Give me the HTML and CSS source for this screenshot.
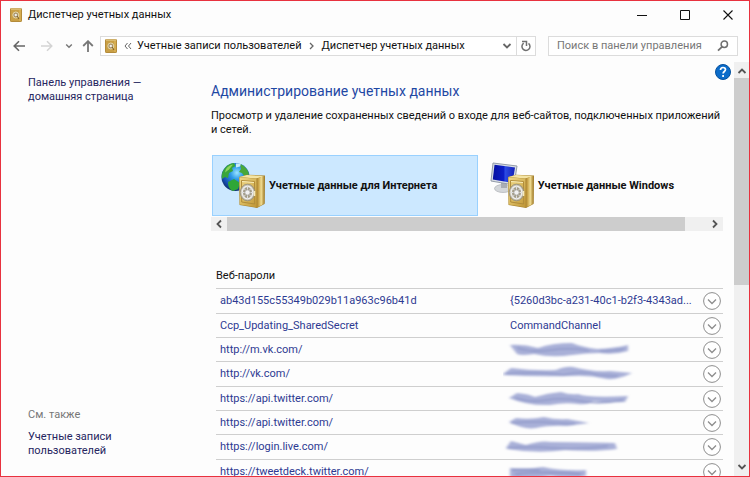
FILE: index.html
```html
<!DOCTYPE html>
<html lang="ru">
<head>
<meta charset="utf-8">
<title>Диспетчер учетных данных</title>
<link rel="stylesheet" href="styles.css">
</head>
<body>
<svg class="defs" aria-hidden="true">
  <defs>
    <linearGradient id="gold" x1="0" y1="0" x2="1" y2="1"><stop offset="0" stop-color="#efd98a"/><stop offset=".5" stop-color="#d9b95f"/><stop offset="1" stop-color="#c09636"/></linearGradient>
    <linearGradient id="side" x1="0" y1="0" x2="1" y2="0"><stop offset="0" stop-color="#a37c2b"/><stop offset=".25" stop-color="#c9a348"/><stop offset=".6" stop-color="#f0dc92"/><stop offset="1" stop-color="#a27c28"/></linearGradient>
    <radialGradient id="sea" cx=".55" cy=".35" r=".65"><stop offset="0" stop-color="#9be4ff"/><stop offset=".35" stop-color="#2f9be8"/><stop offset=".8" stop-color="#164cb0"/><stop offset="1" stop-color="#12336f"/></radialGradient>
    <linearGradient id="screen" x1="0" y1="0" x2="1" y2="0"><stop offset="0" stop-color="#0610a0"/><stop offset=".5" stop-color="#0c1ec8"/><stop offset=".55" stop-color="#2c4ce4"/><stop offset="1" stop-color="#1420b8"/></linearGradient>
    <filter id="smear" x="-10%" y="-50%" width="120%" height="200%"><feGaussianBlur stdDeviation="1.6 .9"/></filter>
    <symbol id="safe" viewBox="0 0 28 35">
      <path d="M1 3 9 .7 27 1.500 26.500 30 19 34 1.500 31z" fill="#a8842f"/>
      <path d="M1.500 3 9 1 26.500 2 18.500 4.500z" fill="#f4e4a4"/>
      <path d="M18.500 4.500 26.500 2V29.500L19 33.500z" fill="url(#side)"/>
      <path d="M1.500 3.200 18.500 4.700 18.700 33.300 1.800 30.500z" fill="url(#gold)"/>
      <path d="M3.500 6.500 16.500 7.500 16.700 30 3.700 28z" fill="none" stroke="#b08c3a"/>
      <path d="M4 7.500 16 8.500" stroke="#f9edb9"/>
      <ellipse cx="9.500" cy="18.500" rx="7.300" ry="8.300" fill="#c4bda6" stroke="#8f8b80" stroke-width=".8"/>
      <ellipse cx="9.500" cy="18.500" rx="5.300" ry="6.300" fill="#a49d88" stroke="#ececec" stroke-width="1.500"/>
      <path d="M9.500 12v13M4 18.500h11M5.500 14l8 9M13.500 14l-8 9" stroke="#ddd"/>
      <circle cx="9.500" cy="18.500" r="2.700" fill="#f1f1f1" stroke="#9a978f" stroke-width=".8"/>
      <path d="M16.500 17v5" stroke="#f5eac0" stroke-width="1.500"/>
    </symbol>
    <symbol id="mini" viewBox="0 0 12 14">
      <rect x=".5" y=".5" width="11" height="13" rx=".6" fill="#c99f45" stroke="#b48b3a"/>
      <path d="M1 1h10" stroke="#ead59a"/><path d="M10 2v11" stroke="#e1bc61"/>
      <circle cx="5.800" cy="7" r="3" fill="#a89367" stroke="#e6d7ab"/>
      <circle cx="5.800" cy="7" r="1.200" fill="#eee"/><path d="m7 8 2 3" stroke="#765b28"/>
    </symbol>
    <symbol id="expand" viewBox="0 0 18 18"><circle cx="9" cy="9" r="8.400" fill="#fff" stroke="#8d8d8d"/><path d="m5 7.500 4 4 4-4" fill="none" stroke="#8d8d8d" stroke-width="1.300"/></symbol>
    <symbol id="down" viewBox="0 0 10 10"><path d="m1.500 3 3.500 3.500L8.500 3" fill="none" stroke="currentColor" stroke-width="1.800"/></symbol>
  </defs>
</svg>
<div class="window">
  <header class="titlebar">
    <svg class="app-icon" aria-hidden="true"><use href="#mini"/></svg>
    <h1>Диспетчер учетных данных</h1>
    <div class="caption">
      <button aria-label="Свернуть"><svg width="10" height="10"><path d="M0 5.500h10" stroke="#111"/></svg></button>
      <button aria-label="Развернуть"><svg width="10" height="10"><path d="M.5.5h9v9h-9z" fill="none" stroke="#111"/></svg></button>
      <button aria-label="Закрыть"><svg width="10" height="10"><path d="m.5.500 9 9m0-9-9 9" stroke="#111" stroke-width="1.100"/></svg></button>
    </div>
  </header>
  <nav class="toolbar" aria-label="Навигация">
    <button aria-label="Назад"><svg width="12" height="12"><path d="M12 6H1.500M6 1.200 1.200 6 6 10.800" fill="none" stroke="#666" stroke-width="1.600"/></svg></button>
    <button class="forward" aria-label="Вперед"><svg width="12" height="12"><path d="M0 6h10.500M6 1.200 10.800 6 6 10.800" fill="none" stroke="#d4d4d4" stroke-width="1.500"/></svg></button>
    <button class="recent" aria-label="Последние"><svg width="8" height="8" viewBox="0 0 10 10"><use href="#down"/></svg></button>
    <button aria-label="Вверх"><svg width="12" height="12"><path d="M6 12V1.500M1.200 6 6 1.200 10.800 6" fill="none" stroke="#777" stroke-width="1.800"/></svg></button>
    <div class="address">
      <svg class="app-icon" aria-hidden="true"><use href="#mini"/></svg>
      <svg class="laquo" width="8" height="8"><path d="M3.500 1 1 4l2.500 3M7 1 4.500 4 7 7" fill="none" stroke="#666"/></svg>
      <a href="#">Учетные записи пользователей</a>
      <svg width="6" height="8"><path d="M1 1l3 3-3 3" fill="none" stroke="#666" stroke-width="1.300"/></svg>
      <a href="#">Диспетчер учетных данных</a>
      <button class="history" aria-label="Список адресов"><svg width="10" height="10"><use href="#down"/></svg></button>
      <button class="refresh" aria-label="Обновить"><svg width="10" height="12"><path d="M2.700 3.200a4 4 0 1 0 4.800.2" fill="none" stroke="#707070" stroke-width="1.500"/><path d="M1 1.500h4.500V6" fill="none" stroke="#707070" stroke-width="1.500"/></svg></button>
    </div>
    <div class="search">
      <input type="search" aria-label="Поиск" placeholder="Поиск в панели управления">
      <svg width="12" height="12"><circle cx="7.300" cy="4.200" r="3.200" fill="none" stroke="#707070" stroke-width="1.500"/><path d="M5 6.800 1 10.700" stroke="#707070" stroke-width="1.800"/></svg>
    </div>
  </nav>
  <div class="body">
    <aside>
      <a href="#">Панель управления — домашняя страница</a>
      <section>
        <h3>См. также</h3>
        <a href="#">Учетные записи пользователей</a>
      </section>
    </aside>
    <main>
      <button class="help" aria-label="Справка"><svg width="16" height="16"><circle cx="8" cy="8" r="7.500" fill="#0b6cca" stroke="#07529e"/><path d="M5.500 6c0-3.300 5-3.200 5-.4 0 2-2.400 1.800-2.400 4M8.100 11v1.900" fill="none" stroke="#fff" stroke-width="1.700"/></svg></button>
      <h2>Администрирование учетных данных</h2>
      <p>Просмотр и удаление сохраненных сведений о входе для веб-сайтов, подключенных приложений и сетей.</p>
      <div class="tiles">
        <button class="tile selected">
          <svg width="46" height="48" aria-hidden="true">
            <circle cx="14.500" cy="15" r="14" fill="url(#sea)"/>
            <path d="M2 9C5 4 8 1.500 13 1l1.500 3-3.500 2 1 3-4 2-1 5-3-1-3 2C.3 14 .8 11 2 9z" fill="#39a53b"/>
            <path d="M19 2c5 2 8 6 9 10l-4 3-3-4-3-1 2-3z" fill="#49a83a"/>
            <path d="M7 20l6-3 6 4-2 6-5 2c-3-1-5-4-5-9z" fill="#2fa637"/>
            <path d="M5 7c2-2.500 4-4 7-4.500l-4 5-4 3z" fill="#8fd45c"/>
            <path d="M15 1.500h5l-1 3-4 1z" fill="#e4fafa" opacity=".85"/>
            <use href="#safe" x="17" y="12" width="28" height="35"/>
          </svg>
          <span>Учетные данные для Интернета</span>
        </button>
        <button class="tile">
          <svg width="46" height="48" aria-hidden="true">
            <ellipse cx="13" cy="26.500" rx="8.500" ry="4" fill="#d4d7da" stroke="#a4a8ad" stroke-width=".6"/>
            <path d="m11 20 6 1v5h-6z" fill="#a9adb3"/>
            <path d="M3 1 27 4 24 23 1 19z" fill="#d9dee5" stroke="#929ba8"/>
            <path d="M4.500 2.800 25 5.400 22.500 21 2.800 17.500z" fill="url(#screen)"/>
            <use href="#safe" x="17" y="12" width="28" height="35"/>
          </svg>
          <span>Учетные данные Windows</span>
        </button>
      </div>
      <div class="hscroll" aria-hidden="true"><svg class="left" width="10" height="10"><use href="#down"/></svg><i></i><svg class="right" width="10" height="10"><use href="#down"/></svg></div>
      <table>
        <caption>Веб-пароли</caption>
        <tbody>
        <tr><td><a href="#">ab43d155c55349b029b11a963c96b41d</a></td><td>{5260d3bc-a231-40c1-b2f3-4343ad...</td><td><button aria-label="Развернуть"><svg><use href="#expand"/></svg></button></td></tr>
        <tr><td><a href="#">Ccp_Updating_SharedSecret</a></td><td>CommandChannel</td><td><button aria-label="Развернуть"><svg><use href="#expand"/></svg></button></td></tr>
        <tr><td><a href="#">http://m.vk.com/</a></td><td><svg class="smear" viewBox="0 0 140 18"><g filter="url(#smear)"><path d="M7 4q14-1 28 3 14-5 34-5 10 4 25 6 18-1 31-4v6q-13 4-29 2-12 0-27 2-20 3-38-1-13 2-17 0Z" fill="#a9b0d8"/><path d="M14 7q16 5 35 2t37 1M97 10q14 0 24-2" fill="none" stroke="#8f98c8" stroke-width="1.500"/></g></svg></td><td><button aria-label="Развернуть"><svg><use href="#expand"/></svg></button></td></tr>
        <tr><td><a href="#">http://vk.com/</a></td><td><svg class="smear" viewBox="0 0 140 18"><g filter="url(#smear)"><path d="M0 9 8 3q24 3 45 2 10-4 17-3 18 5 37 4l22 2q-14 7-25 6-18-4-35-3-34 1-69-1Z" fill="#a9b0d8"/><path d="M3 9q28-3 58 1 18-5 34 0l20 1" fill="none" stroke="#8f98c8" stroke-width="1.500"/></g></svg></td><td><button aria-label="Развернуть"><svg><use href="#expand"/></svg></button></td></tr>
        <tr><td><a href="#">https://api.twitter.com/</a></td><td><svg class="smear" viewBox="0 0 140 18"><g filter="url(#smear)"><path d="M6 8 14 3q12 1 18 4 13-4 26-5 8 3 17 2 10 4 50 2l-3 6q-19 1-32-1-4 4-15 3-13-2-28 1-22 1-41-7Z" fill="#a9b0d8"/><path d="M12 8q16 5 32 2t34 1 42-1" fill="none" stroke="#8f98c8" stroke-width="1.500"/></g></svg></td><td><button aria-label="Развернуть"><svg><use href="#expand"/></svg></button></td></tr>
        <tr><td><a href="#">https://api.twitter.com/</a></td><td><svg class="smear" viewBox="0 0 140 18"><g filter="url(#smear)"><path d="M6 8 13 4q14 2 28-1 12 3 23 2l22 4-22 3q-18-1-31 2-12 2-27-6Z" fill="#a9b0d8"/><path d="M8 9q26-2 44 0l20 1" fill="none" stroke="#8f98c8" stroke-width="1.500"/></g></svg></td><td><button aria-label="Развернуть"><svg><use href="#expand"/></svg></button></td></tr>
        <tr><td><a href="#">https://login.live.com/</a></td><td><svg class="smear" viewBox="0 0 140 18"><g filter="url(#smear)"><path d="M3 10 8 3l15 4q15-5 25-3 24 0 64 1l2 6q-22 3-52 1-27 4-58-1Z" fill="#a9b0d8"/><path d="M5 10q24-2 45 0t55-2" fill="none" stroke="#8f98c8" stroke-width="1.500"/></g></svg></td><td><button aria-label="Развернуть"><svg><use href="#expand"/></svg></button></td></tr>
        <tr><td><a href="#">https://tweetdeck.twitter.com/</a></td><td><svg class="smear" viewBox="0 0 140 18"><g filter="url(#smear)"><path d="M7 5q20 1 33-1 19 4 43 3v6q-16 3-36 0-18 4-40 1Z" fill="#a9b0d8"/><path d="M9 7h28M12 11q28-3 66 0" fill="none" stroke="#858fc2" stroke-width="1.500"/></g></svg></td><td><button aria-label="Развернуть"><svg><use href="#expand"/></svg></button></td></tr>
        </tbody>
      </table>
    </main>
    <div class="vscroll" aria-hidden="true"><svg class="up" width="10" height="10"><use href="#down"/></svg><div class="track"><i></i></div><svg width="10" height="10"><use href="#down"/></svg></div>
  </div>
</div>
</body>
</html>
```
FILE: styles.css
```css
* { box-sizing: border-box; }
body { margin: 0; color: #111; font: 11px/14px Roboto, "Open Sans", sans-serif; }
h1, h2, h3, p { margin: 0; font-weight: 400; }
button { display: flex; align-items: center; justify-content: center; margin: 0; padding: 0; border: 0; background: none; color: inherit; font: inherit; }
a { color: inherit; text-decoration: none; }
svg { display: block; flex: none; }
.defs { position: absolute; width: 0; height: 0; }
.window { display: flex; flex-direction: column; height: 100vh; overflow: hidden; border: 1px solid #e8323f; background: #fdfdfd; }

.titlebar { display: flex; align-items: center; height: 28px; padding: 0 12px 0 9px; }
.titlebar h1 { margin-left: 6px; font-size: 11px; line-height: 16px; }
.app-icon { width: 12px; height: 14px; }
.caption { display: flex; gap: 33px; margin-left: auto; padding-right: 4px; }

.toolbar { display: flex; align-items: center; height: 33px; padding: 0 11px 0 12px; }
.toolbar > button { width: 12px; height: 20px; }
.toolbar > .forward { margin-left: 16px; }
.toolbar > .recent { width: 8px; margin: 0 9px 0 12px; color: #777; }
.address { display: flex; flex: 1; align-items: center; gap: 7px; height: 20px; margin-left: 6px; padding-left: 4px; border: 1px solid #dcdcdc; background: #fff; white-space: nowrap; }
.address .laquo { margin-right: -2px; }
.address button { height: 18px; color: #666; }
.history { width: 18px; margin-left: auto; }
.refresh { width: 19px; margin-left: -7px; border-left: 1px solid #dcdcdc; }
.search { display: flex; align-items: center; width: 190px; height: 20px; margin-left: 12px; padding: 0 8px; border: 1px solid #dcdcdc; background: #fff; }
.search input { flex: 1; min-width: 0; padding: 0; border: 0; outline: 0; background: none; font: inherit; }
.search input::placeholder { color: #777; opacity: 1; }

.body { display: grid; flex: 1; grid-template-columns: 210px minmax(0, 1fr) 15px; min-height: 0; }
aside { display: flex; flex-direction: column; justify-content: space-between; padding: 14px 48px 18px 27px; color: #25255f; }
aside h3 { margin-bottom: 8px; color: #777; font-size: 11px; }
aside a { display: block; }
main { position: relative; min-width: 0; padding: 20px 11px 0 0; overflow: hidden; }
.help { position: absolute; top: 2px; right: 3px; }
h2 { color: #1f48a4; font-size: 14px; line-height: 18px; }
p { margin-top: 9px; }
.tiles { display: flex; gap: 3px; height: 61px; margin: 18px 0 0 1px; overflow: hidden; }
.tile { flex: 0 0 52%; justify-content: flex-start; padding: 0 8px; border: 1px solid transparent; font-weight: 700; white-space: nowrap; }
.tile.selected { border-color: #99d1ff; background: #cce8ff; }
.tile span { margin-left: 2px; }
.hscroll { display: flex; align-items: center; height: 14px; margin-top: 1px; background: #f0f0f0; color: #555; }
.hscroll i { flex: 1; align-self: stretch; margin: 0 25px 0 3px; background: #cdcdcd; }
.left { margin-left: 3px; transform: rotate(90deg); }
.right { margin-right: 3px; transform: rotate(-90deg); }

table { width: calc(100% - 5px); margin: 38px 0 0 5px; border-collapse: collapse; table-layout: fixed; }
caption { padding-bottom: 5px; text-align: left; }
tr { height: 24px; border-top: 1px solid #cfcfcf; }
tr:nth-child(3n + 1) { height: 25px; }
td { padding: 0 4px; color: #2d3a92; white-space: nowrap; }
td:nth-child(1) { width: 57%; }
td:nth-child(2) { padding-left: 5px; }
td:nth-child(3) { width: 22px; padding: 0 2px; }
td button, td button svg { width: 18px; height: 18px; }
.smear { width: 140px; height: 18px; margin-left: -7px; }

.vscroll { display: flex; flex-direction: column; align-items: center; padding: 4px 0; background: #f0f0f0; color: #555; }
.up { transform: rotate(180deg); }
.track { flex: 1; width: 100%; padding-top: 2px; }
.track i { display: block; height: 54%; background: #cdcdcd; }
```
